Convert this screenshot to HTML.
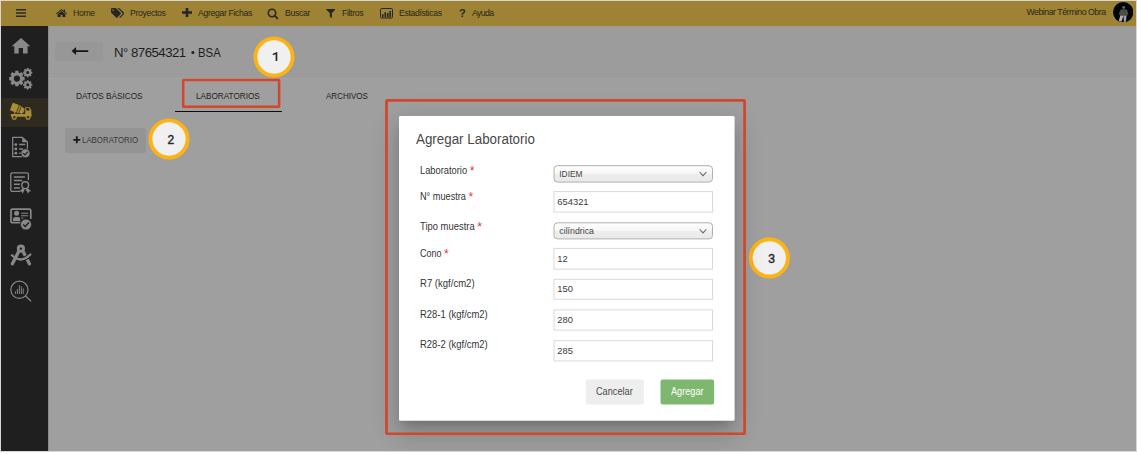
<!DOCTYPE html>
<html>
<head>
<meta charset="utf-8">
<title>Agregar Laboratorio</title>
<style>
html,body{margin:0;padding:0;background:#fff;}
body{width:1137px;height:454px;position:relative;overflow:hidden;font-family:"Liberation Sans",sans-serif;}
.abs{position:absolute;}
#frame{position:absolute;left:0;top:0;width:1135px;height:450px;border:1px solid #d6d6d6;background:#9f9f9f;overflow:hidden;}
/* coordinates inside frame are offset by -1 (frame content starts at 1,1) */
.nav{position:absolute;height:25px;line-height:25px;font-size:8.7px;color:#2a2618;white-space:nowrap;letter-spacing:-0.35px;}
.t{position:absolute;white-space:nowrap;}
.circle{position:absolute;width:33.400px;height:33.400px;border:3.900px solid #fbb316;border-radius:50%;background:#f0f0f0;}
.dg{position:absolute;font-size:12px;line-height:14px;color:#262a33;-webkit-text-stroke:0.450px #262a33;}
.redbox{position:absolute;border:2px solid #d8452c;box-sizing:border-box;}
.lbl{position:absolute;left:419.500px;font-size:10.200px;line-height:12px;color:#353535;white-space:nowrap;transform-origin:0 0;transform:scaleX(0.900);}
.lbl i{color:#e0393e;font-style:normal;font-size:13.500px;line-height:0;position:relative;top:1.500px;}
.val{position:absolute;left:557.300px;font-size:9.400px;line-height:11px;color:#3a3a3a;white-space:nowrap;}
.sv{position:absolute;left:559.300px;font-size:8.400px;line-height:10px;color:#444;white-space:nowrap;}
</style>
</head>
<body>
<div id="frame"><div id="o" style="position:absolute;left:-1px;top:-1px;width:1137px;height:454px;">
  <!-- TOPBAR -->
  <div class="abs" id="topbar" style="left:1px;top:1px;width:1135px;height:25px;background:#9e8335;"></div>
  <!-- SIDEBAR -->
  <div class="abs" id="sidebar" style="left:1px;top:26px;width:47px;height:425px;background:#1f1f1f;"></div>
  <div class="abs" style="left:1px;top:98px;width:47px;height:29px;background:#2e2a1f;"></div>

  <!-- SIDEICONS -->
<svg class="abs" style="left:0;top:0;" width="60" height="320" viewBox="0 0 60 320">
<path d="M21 38 L11.6 46.200 H14.300 V53.600 H18.700 V47.900 H23 V53.600 H27.600 V46.200 H30.300 Z" fill="#888888"/>
<path d="M22.84 76.81 L24.65 77.07 L24.65 80.13 L22.84 80.39 L22.36 81.54 L23.46 83.00 L21.30 85.16 L19.84 84.06 L18.69 84.54 L18.43 86.35 L15.37 86.35 L15.11 84.54 L13.96 84.06 L12.50 85.16 L10.34 83.00 L11.44 81.54 L10.96 80.39 L9.15 80.13 L9.15 77.07 L10.96 76.81 L11.44 75.66 L10.34 74.20 L12.50 72.04 L13.96 73.14 L15.11 72.66 L15.37 70.85 L18.43 70.85 L18.69 72.66 L19.84 73.14 L21.30 72.04 L23.46 74.20 L22.36 75.66Z M13.80 78.60 a3.10 3.10 0 1 0 6.20 0 a3.10 3.10 0 1 0 -6.20 0Z" fill="#888888" fill-rule="evenodd"/>
<path d="M31.15 71.56 L32.31 71.69 L32.31 73.51 L31.15 73.64 L30.87 74.30 L31.60 75.22 L30.32 76.50 L29.40 75.77 L28.74 76.05 L28.61 77.21 L26.79 77.21 L26.66 76.05 L26.00 75.77 L25.08 76.50 L23.80 75.22 L24.53 74.30 L24.25 73.64 L23.09 73.51 L23.09 71.69 L24.25 71.56 L24.53 70.90 L23.80 69.98 L25.08 68.70 L26.00 69.43 L26.66 69.15 L26.79 67.99 L28.61 67.99 L28.74 69.15 L29.40 69.43 L30.32 68.70 L31.60 69.98 L30.87 70.90Z M26.20 72.60 a1.50 1.50 0 1 0 3.00 0 a1.50 1.50 0 1 0 -3.00 0Z" fill="#888888" fill-rule="evenodd"/>
<path d="M31.15 83.76 L32.31 83.89 L32.31 85.71 L31.15 85.84 L30.87 86.50 L31.60 87.42 L30.32 88.70 L29.40 87.97 L28.74 88.25 L28.61 89.41 L26.79 89.41 L26.66 88.25 L26.00 87.97 L25.08 88.70 L23.80 87.42 L24.53 86.50 L24.25 85.84 L23.09 85.71 L23.09 83.89 L24.25 83.76 L24.53 83.10 L23.80 82.18 L25.08 80.90 L26.00 81.63 L26.66 81.35 L26.79 80.19 L28.61 80.19 L28.74 81.35 L29.40 81.63 L30.32 80.90 L31.60 82.18 L30.87 83.10Z M26.20 84.80 a1.50 1.50 0 1 0 3.00 0 a1.50 1.50 0 1 0 -3.00 0Z" fill="#888888" fill-rule="evenodd"/>
<g fill="#a98c33">
<g transform="rotate(20 17.500 108.500)"><path d="M12.200 104.700 H19.600 L24.500 106.600 V110.800 L19.600 112.900 H12.200 a1.200 1.200 0 0 1 -1.200 -1.200 V105.900 a1.200 1.200 0 0 1 1.200 -1.200Z"/></g>
<rect x="10.900" y="114" width="20.600" height="2.700" rx="0.500"/>
<rect x="14.200" y="110.500" width="1" height="4"/>
<rect x="20.800" y="112" width="1.200" height="2.500"/>
<path d="M25.200 107.200 H29.600 L31.300 110 V116 H25.200Z M26.200 108.100 V110.400 H29.900 L28.900 108.100Z" fill-rule="evenodd"/>
</g>
<circle cx="14.3" cy="117.300" r="1.900" fill="#2e2a1f" stroke="#a98c33" stroke-width="1.300"/>
<circle cx="28" cy="117.300" r="1.900" fill="#2e2a1f" stroke="#a98c33" stroke-width="1.300"/>
<g transform="rotate(20 17.500 108.500)" stroke="#2e2a1f" stroke-width="0.700"><path d="M18 104.300 V113.200 M20.200 104.300 V113.200"/></g>
<path d="M22 156.700 H12.700 V137.400 H22.400 L27.400 142 V149.500" fill="none" stroke="#888888" stroke-width="1.200" stroke-linejoin="round"/>
<path d="M22.200 137.400 L27.600 142.300 H22.200Z" fill="#888888"/>
<circle cx="15.900" cy="144.6" r="1.350" fill="#888888"/>
<path d="M13.800 144.6 H15" stroke="#888888" stroke-width="0.600"/>
<circle cx="15.900" cy="148.9" r="1.350" fill="#888888"/>
<path d="M13.800 148.9 H15" stroke="#888888" stroke-width="0.600"/>
<circle cx="15.900" cy="153.2" r="1.350" fill="#888888"/>
<path d="M13.800 153.2 H15" stroke="#888888" stroke-width="0.600"/>
<path d="M19.200 144.600 H25.200 M19.200 148.900 H23 M19.200 153.200 H21" stroke="#888888" stroke-width="1.500"/>
<circle cx="25.500" cy="153.300" r="4.500" fill="#888888" stroke="#1f1f1f" stroke-width="0.700"/>
<path d="M23.100 153.200 L24.900 155 L28 151.700" fill="none" stroke="#1f1f1f" stroke-width="1.200"/>
<path d="M20.300 191.400 H12.200 a1.400 1.400 0 0 1 -1.400 -1.400 V174.200 a1.400 1.400 0 0 1 1.400 -1.400 H27 a1.400 1.400 0 0 1 1.400 1.400 V180.300" fill="none" stroke="#888888" stroke-width="1.300"/>
<path d="M13.900 176.900 H24.900 M13.900 180.500 H22.200 M13.900 184.200 H19.900 M13.900 187.900 H19.900" stroke="#888888" stroke-width="1.500"/>
<circle cx="25.200" cy="185.200" r="3.400" fill="none" stroke="#888888" stroke-width="1.400"/>
<path d="M22.700 188.300 L19.300 191.300 L21.700 191.400 L22.600 193.700 L24.800 189.400Z M27.700 188.300 L31.400 191.300 L28.900 191.400 L28 193.700 L25.700 189.400Z" fill="#888888"/>
<path d="M20.500 222.700 H12.300 a1.300 1.300 0 0 1 -1.300 -1.300 V210.400 a1.300 1.300 0 0 1 1.300 -1.300 H29.500 a1.300 1.300 0 0 1 1.300 1.300 V219" fill="none" stroke="#888888" stroke-width="1.700"/>
<circle cx="16.600" cy="213.300" r="2.500" fill="#888888"/>
<path d="M13 221 V219.200 a2.100 2.100 0 0 1 2.100 -2.100 H18.100 a2.100 2.100 0 0 1 2.100 2.100 V221Z" fill="#888888"/>
<path d="M21.200 213.300 H28.200 M21.200 215.700 H28.200 M21.200 218 H23.300" stroke="#888888" stroke-width="1.100"/>
<circle cx="26" cy="224.500" r="5.500" fill="#888888" stroke="#1f1f1f" stroke-width="0.800"/>
<path d="M23.200 224.500 L25.200 226.500 L29 222.500" fill="none" stroke="#1f1f1f" stroke-width="1.400"/>
<path d="M18.400 252 L12.400 263.800 M23.400 252 L29.400 263.800" stroke="#888888" stroke-width="3.300" stroke-linecap="round"/>
<circle cx="20.900" cy="248.600" r="2.650" fill="none" stroke="#888888" stroke-width="2.900"/>
<path d="M21 259.300 Q26.500 258.800 30.300 254.500" fill="none" stroke="#1f1f1f" stroke-width="4.200"/>
<path d="M12 255.200 Q21 264 30.300 254.500" fill="none" stroke="#888888" stroke-width="2.300" stroke-linecap="round"/>
<circle cx="19.400" cy="289.800" r="8.600" fill="none" stroke="#888888" stroke-width="1.200"/>
<path d="M25.600 296 L30.800 301" stroke="#888888" stroke-width="1.100" stroke-linecap="round"/>
<path d="M15.500 294 V291.200 M17.400 294 V289 M19.400 294 V285.200 M21.400 294 V286.400 M23.300 294 V288.600" stroke="#7a7a7a" stroke-width="1.100"/>
</svg>
<!-- /SIDEICONS -->
  <div class="abs" style="left:48px;top:26px;width:1px;height:425px;background:#8c8c8c;"></div>
  <!-- topbar nav text -->
  <div class="nav" style="left:73px;top:1px;">Home</div>
  <div class="nav" style="left:130px;top:1px;">Proyectos</div>
  <div class="nav" style="left:198px;top:1px;">Agregar Fichas</div>
  <div class="nav" style="left:285px;top:1px;">Buscar</div>
  <div class="nav" style="left:342px;top:1px;">Filtros</div>
  <div class="nav" style="left:399px;top:1px;">Estadísticas</div>
  <div class="nav" style="left:472px;top:1px;letter-spacing:-0.600px;">Ayuda</div>
  <div class="nav" style="left:1026.500px;top:0px;letter-spacing:-0.45px;">Webinar Término Obra</div>

  <!-- topbar icons -->
  <svg class="abs" style="left:16px;top:9px;" width="10" height="8" viewBox="0 0 10 8"><path d="M0 0h10v1.4H0zM0 3.3h10v1.4H0zM0 6.6h10V8H0z" fill="#2b2b2b"/></svg>
  <svg class="abs" style="left:56px;top:9px;" width="11" height="8" viewBox="0 0 11 8"><path d="M5.5 0L0 4.5l.6.7 4.9-4 4.9 4 .6-.7-2-1.6V.5H7.8v1.4z" fill="#262626"/><path d="M5.5 2L1.6 5.2V8h3V5.8h1.8V8h3V5.2z" fill="#262626"/></svg>
  <svg class="abs" style="left:110.5px;top:8px;" width="13.5" height="10" viewBox="0 0 13.5 10"><path d="M0 .9C0 .4.4 0 .9 0h3.3c.4 0 .9.2 1.2.5l4.3 4.3c.4.4.4 1 0 1.3L6.4 9.400000000000001c-.4.4-1 .4-1.3 0L.5 5C.2 4.700000000000001 0 4.300000000000001 0 3.8z M2.1 1.3a.8.8 0 100 1.6.8.8 0 000-1.600z" fill="#262626" fill-rule="evenodd"/><path d="M6.300 0h1.200c.4 0 .9.2 1.200.5l4.300 4.300c.4.4.4 1 0 1.300L9.700 9.400c-.4.4-1 .4-1.300 0l-.1-.1 3.100-3.100c.4-.4.4-1 0-1.300L7.100.5C6.900.3 6.600.1 6.300 0z" fill="#262626"/></svg>
  <svg class="abs" style="left:181.500px;top:8px;" width="10" height="9" viewBox="0 0 10 9"><path d="M3.700 0h2.600v3.200H10v2.600H6.300V9H3.700V5.800H0V3.200h3.700z" fill="#262626"/></svg>
  <svg class="abs" style="left:267px;top:7.500px;" width="12" height="12" viewBox="0 0 12 12"><circle cx="5" cy="5" r="3.700" fill="none" stroke="#262626" stroke-width="1.600"/><path d="M7.700 7.700l2.700 2.700" stroke="#262626" stroke-width="1.900" stroke-linecap="round"/></svg>
  <svg class="abs" style="left:325.500px;top:8.600px;" width="9.500" height="9.500" viewBox="0 0 10 10"><path d="M.3 0h9.400c.3 0 .4.300.2.500L6.200 4.300v4.900c0 .3-.3.400-.5.200L4 8V4.300L.1.500C-.1.300 0 0 .3 0z" fill="#262626"/></svg>
  <svg class="abs" style="left:380px;top:7.500px;" width="13" height="11" viewBox="0 0 13 11"><rect x=".5" y=".5" width="12" height="9.500" rx="1.200" fill="none" stroke="#262626" stroke-width="1"/><path d="M2 6.200h1.600v3H2zM4.500 4.300h1.600v4.900H4.500zM7 5h1.600v4.200H7zM9.400 3h1.600v6.200H9.400z" fill="#262626"/></svg>
  <div class="t" style="left:459px;top:6px;font-size:11px;line-height:14px;font-weight:bold;color:#262626;">?</div>
  <svg class="abs" style="left:1112.700px;top:1.900px;" width="20.400" height="20.400" viewBox="0 0 20 20"><circle cx="10" cy="10" r="10" fill="#050505"/><circle cx="10.500" cy="5.300" r="1.350" fill="#6a6a6a"/><path d="M7.600 7.400 Q10.500 6.600 13.600 7.400 L15 11.300 L13.700 13.700 H7 L5.800 11.300Z" fill="#4c4c4c"/><path d="M7.100 13.500 H10.200 L8.300 19.300 L5.700 18.600Z" fill="#b4b4b4"/><path d="M10.300 13.500 H13.200 L12.800 19.100 L10.700 19.500Z" fill="#a2a2a2"/></svg>

  <!-- header -->
  <div class="abs" style="left:49px;top:26px;width:1087px;height:53px;background:#9c9c9c;"></div>
  <div class="abs" style="left:49px;top:78px;width:1087px;height:1px;background:#a3a3a3;"></div>
  <div class="abs" style="left:55px;top:42px;width:48px;height:19px;background:#979797;border-radius:2px;"></div>
  <svg class="abs" style="left:71px;top:46px;" width="18" height="10" viewBox="0 0 18 10"><path d="M0.600 5.100 L5.100 1.100 V4.200 H17.200 V6 H5.100 V9.100Z" fill="#161616"/></svg>
  <div class="t" id="title" style="left:114px;top:44.500px;font-size:13.200px;line-height:16px;color:#1e1e1e;letter-spacing:-0.500px;">N° 87654321</div>
  <div class="t" id="title2" style="left:198px;top:44.500px;font-size:13.200px;line-height:16px;color:#1e1e1e;transform-origin:0 0;transform:scaleX(0.860);">BSA</div>
  <svg class="abs" style="left:188px;top:48px;" width="10" height="10" viewBox="0 0 10 10"><circle cx="4.900" cy="4.400" r="1.500" fill="#1e1e1e"/></svg>

  <!-- tabs -->
  <div class="t" id="tab1" style="left:76.200px;top:89.600px;font-size:9.400px;line-height:11px;color:#222;transform-origin:0 0;transform:scaleX(0.879);">DATOS BÁSICOS</div>
  <div class="t" id="tab2" style="left:195.600px;top:89.600px;font-size:9.400px;line-height:11px;color:#222;transform-origin:0 0;transform:scaleX(0.873);">LABORATORIOS</div>
  <div class="t" id="tab3" style="left:325.800px;top:89.600px;font-size:9.400px;line-height:11px;color:#222;transform-origin:0 0;transform:scaleX(0.857);">ARCHIVOS</div>
  <div class="abs" style="left:175px;top:111px;width:107px;height:1px;background:#0c0c0c;"></div>
  <svg class="abs" style="left:180px;top:76px;" width="104" height="36" viewBox="180 76 104 36"><rect x="183.200" y="80.050" width="95.900" height="26.600" rx="0.300" fill="none" stroke="#d2462b" stroke-width="2.500"/></svg>

  <!-- + laboratorio -->
  <div class="abs" style="left:65px;top:128px;width:80.500px;height:25px;background:#949494;border-radius:2px;"></div>
  <svg class="abs" style="left:72.500px;top:136px;" width="8" height="8" viewBox="0 0 8 8"><path d="M2.900 0.300 H4.700 V2.900 H7.300 V4.700 H4.700 V7.300 H2.900 V4.700 H0.300 V2.900 H2.900Z" fill="#1a1a1a"/></svg>
  <div class="t" id="addlab" style="left:81.600px;top:133.500px;font-size:9.600px;line-height:11px;color:#3a3a3a;transform-origin:0 0;transform:scaleX(0.820);">LABORATORIO</div>

  <!-- circles -->
  <svg class="abs" style="left:251.60000000000002px;top:34.7px;" width="44" height="44" viewBox="0 0 44 44"><circle cx="22" cy="22" r="18.600" fill="#f0f0f0" stroke="#fbb316" stroke-width="3.900"/></svg><svg class="abs" style="left:268px;top:48px;" width="14" height="16" viewBox="268 48 14 16"><path d="M277.300 52 V60.900 H275.600 V54.200 L272.800 55.200 V53.800 L276.900 52 Z" fill="#262a33"/></svg>
  <svg class="abs" style="left:146.75px;top:117.1px;" width="44" height="44" viewBox="0 0 44 44"><circle cx="22" cy="22" r="18.600" fill="#f0f0f0" stroke="#fbb316" stroke-width="3.900"/></svg><div class="dg" style="left:167.600px;top:132.900px;">2</div>
  <svg class="abs" style="left:747.5px;top:235.7px;" width="44" height="44" viewBox="0 0 44 44"><circle cx="21.300" cy="21.900" r="18.600" fill="#f0f0f0" stroke="#fbb316" stroke-width="3.900"/></svg><div class="dg" style="left:768.300px;top:251.800px;">3</div>

  <!-- modal -->
  <!--REDBOX2-->
  <div class="abs" id="modal" style="left:399px;top:116px;width:335px;height:304px;background:#fff;box-shadow:0 7px 10px -4px rgba(0,0,0,.22),0 16px 25px 2px rgba(0,0,0,.10),0 6px 30px 5px rgba(0,0,0,.08);border-radius:2px;"></div>
  <svg class="abs" style="left:395px;top:112px;" width="344" height="314" viewBox="395 112 344 314"><rect x="399" y="116.100" width="335.600" height="304.700" rx="1.500" fill="#fff"/></svg>
  <svg class="abs" style="left:380px;top:95px;" width="372" height="345" viewBox="380 95 372 345"><rect x="386.500" y="100.450" width="358.100" height="333.300" rx="1" fill="none" stroke="#d2462b" stroke-width="2.700"/></svg>
  <div class="t" id="mtitle" style="left:416px;top:129.800px;font-size:14.700px;line-height:18px;color:#484848;transform-origin:0 0;transform:scaleX(0.910);">Agregar Laboratorio</div>

  <div class="lbl" id="lb0" style="top:164.72px;transform:scaleX(0.913);">Laboratorio <i>*</i></div>
  <div class="lbl" id="lb1" style="top:190.72px;transform:scaleX(0.900);">N° muestra <i>*</i></div>
  <div class="lbl" id="lb2" style="top:220.72px;transform:scaleX(0.925);">Tipo muestra <i>*</i></div>
  <div class="lbl" id="lb3" style="top:247.72px;transform:scaleX(0.885);">Cono <i>*</i></div>
  <div class="lbl" id="lb4" style="top:277.72px;transform:scaleX(0.936);">R7 (kgf/cm2)</div>
  <div class="lbl" id="lb5" style="top:308.72px;transform:scaleX(0.928);">R28-1 (kgf/cm2)</div>
  <div class="lbl" id="lb6" style="top:338.72px;transform:scaleX(0.928);">R28-2 (kgf/cm2)</div>
  <svg class="abs" style="left:545px;top:160px;" width="180" height="210" viewBox="545 160 180 210">
<defs><linearGradient id="sg" x1="0" y1="0" x2="0" y2="1"><stop offset="0" stop-color="#ffffff"/><stop offset="0.48" stop-color="#f6f6f6"/><stop offset="0.52" stop-color="#ededed"/><stop offset="1" stop-color="#e9e9e9"/></linearGradient></defs>
<rect x="554" y="165.70" width="158.500" height="16.40" rx="3.500" fill="url(#sg)" stroke="#b0b0b0" stroke-width="1"/>
<path d="M699.600 172.00 L703 175.70 L706.400 172.00" fill="none" stroke="#666" stroke-width="1.100"/>
<rect x="554" y="222.80" width="158.500" height="16.10" rx="3.500" fill="url(#sg)" stroke="#b0b0b0" stroke-width="1"/>
<path d="M699.600 229.25 L703 232.95 L706.400 229.25" fill="none" stroke="#666" stroke-width="1.100"/>
<rect x="554" y="191.60" width="158.500" height="20.50" fill="#fff" stroke="#d9d9d9" stroke-width="1"/>
<rect x="554" y="248.40" width="158.500" height="20.80" fill="#fff" stroke="#d9d9d9" stroke-width="1"/>
<rect x="554" y="279.30" width="158.500" height="19.90" fill="#fff" stroke="#d9d9d9" stroke-width="1"/>
<rect x="554" y="309.90" width="158.500" height="20.20" fill="#fff" stroke="#d9d9d9" stroke-width="1"/>
<rect x="554" y="340.70" width="158.500" height="20.20" fill="#fff" stroke="#d9d9d9" stroke-width="1"/>
</svg>
  <div class="val" id="v0" style="top:195.53px;">654321</div>
  <div class="val" id="v1" style="top:252.53px;">12</div>
  <div class="val" id="v2" style="top:282.53px;">150</div>
  <div class="val" id="v3" style="top:313.53px;">280</div>
  <div class="val" id="v4" style="top:344.53px;">285</div>
  <div class="sv" id="s0" style="top:169.34px;">IDIEM</div>
  <div class="sv" id="s1" style="top:226.34px;font-size:8.800px;">cilíndrica</div>

  <svg class="abs" style="left:580px;top:375px;" width="140" height="34" viewBox="580 375 140 34"><rect x="585.900" y="379.500" width="57.900" height="24.900" rx="2" fill="#eeeeee"/><rect x="660.500" y="379.500" width="53.600" height="24.900" rx="2" fill="#7eb870"/></svg>
  <div class="t" id="bcancel" style="left:596.300px;top:385.700px;font-size:10.200px;line-height:12px;color:#4a4a4a;transform-origin:0 0;transform:scaleX(0.900);">Cancelar</div>
  <div class="t" id="bok" style="left:671.200px;top:385.700px;font-size:10.200px;line-height:12px;color:#fff;transform-origin:0 0;transform:scaleX(0.900);">Agregar</div>
</div></div>
</body>
</html>
